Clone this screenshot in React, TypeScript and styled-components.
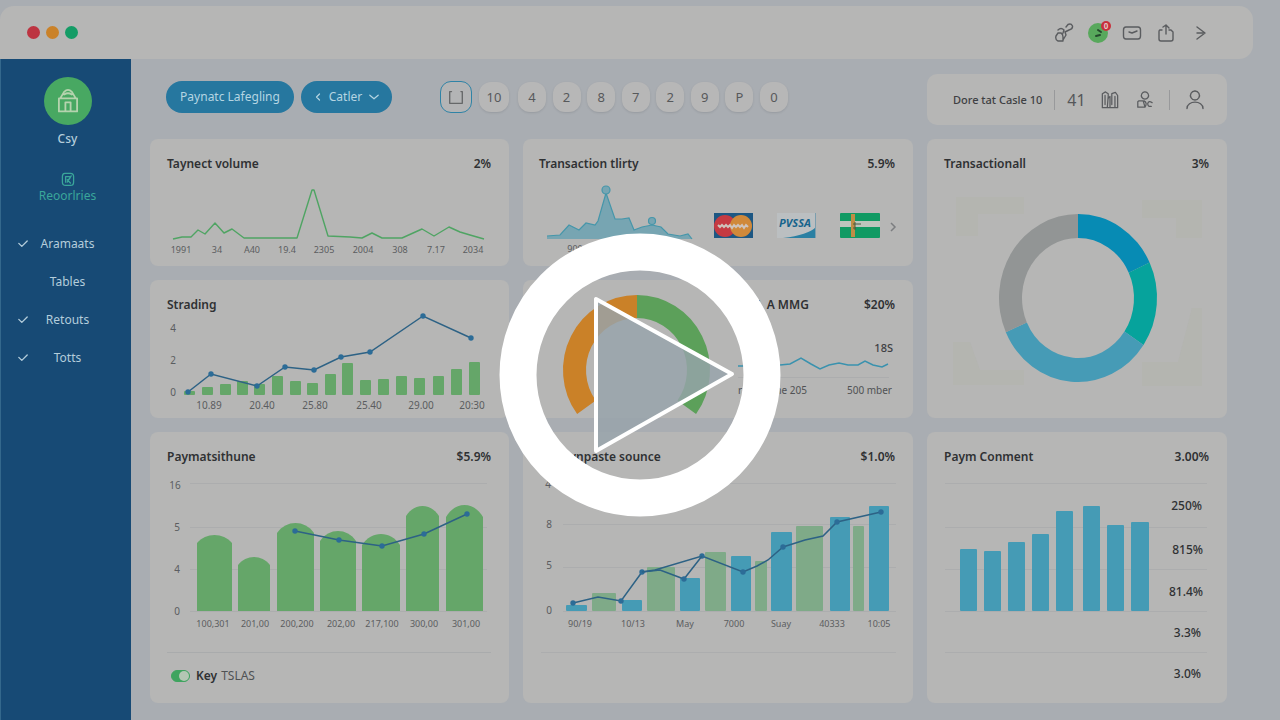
import React from "react";
import styled, { createGlobalStyle } from "styled-components";

const GlobalStyle = createGlobalStyle`
  *, *::before, *::after { box-sizing: border-box; }
  body {
    margin: 0;
    background: #a9adb2;
    color: #2f3133;
    font-family: "Noto Sans", "Open Sans", sans-serif;
    font-size: 12px;
    line-height: 16px;
  }
  button, input { font: inherit; color: inherit; }
`;

/* ---------- page frame ---------- */

const Page = styled.div`
  position: relative;
  display: flex;
  flex-direction: column;
  min-height: 100vh;
  padding-top: 6px;
`;

const WindowBar = styled.header`
  display: flex;
  align-items: center;
  justify-content: space-between;
  height: 53px;
  margin-right: 27px;
  padding: 0 43px 0 27px;
  background: #b6b6b5;
  border-radius: 14px 14px 14px 0;
`;

const Lights = styled.div`
  display: flex;
  gap: 6px;
`;

const Light = styled.span<{ $color: string }>`
  width: 13px;
  height: 13px;
  border-radius: 50%;
  background: ${(p) => p.$color};
`;

const BarActions = styled.div`
  display: flex;
  align-items: center;
  gap: 14px;
`;

const IconButton = styled.button`
  position: relative;
  display: grid;
  place-items: center;
  width: 20px;
  height: 20px;
  padding: 0;
  border: 0;
  background: none;
  color: #5a5c5f;
`;

const StatusButton = styled(IconButton)`
  border-radius: 50%;
  background: #58a85c;
  color: #24482c;
`;

const Badge = styled.span`
  position: absolute;
  top: -2px;
  right: -3px;
  width: 10px;
  height: 10px;
  border-radius: 50%;
  background: #c8303c;
  color: #e4c4c4;
  font-size: 8px;
  font-weight: 700;
  line-height: 10px;
  text-align: center;
`;

const Body = styled.div`
  display: flex;
  flex: 1;
`;

/* ---------- sidebar ---------- */

const Sidebar = styled.aside`
  display: flex;
  flex-direction: column;
  align-items: center;
  width: 131px;
  flex-shrink: 0;
  padding: 18px 0 24px 3px;
  background: #174a75;
  border-left: 1px solid #34688c;
  color: #b4cddb;
`;

const Avatar = styled.div`
  display: grid;
  place-items: center;
  width: 48px;
  height: 48px;
  border-radius: 50%;
  background: #48a862;
  color: #b5d3ae;
`;

const UserName = styled.div`
  margin-top: 6px;
  font-weight: 500;
`;

const ActiveLink = styled.a`
  display: flex;
  flex-direction: column;
  align-items: center;
  gap: 1px;
  margin-top: 24px;
  color: #3aa69a;
  text-decoration: none;
`;

const NavList = styled.ul`
  width: 100%;
  margin: 21px 0 0;
  padding: 0;
  list-style: none;
`;

const NavLink = styled.a`
  display: grid;
  grid-template-columns: 12px 1fr 12px;
  align-items: center;
  height: 38px;
  padding: 0 13px;
  color: inherit;
  text-align: center;
  text-decoration: none;
`;

const NavLabel = styled.span`
  grid-column: 2;
`;

/* ---------- toolbar ---------- */

const Main = styled.main`
  flex: 1;
  min-width: 0;
  padding: 15px 53px 17px 19px;
`;

const Columns = styled.div`
  display: grid;
  grid-template-columns: 359fr 390fr 300fr;
  gap: 14px;
`;

const Toolbar = styled(Columns)`
  margin-bottom: 14px;
`;

const Filters = styled.div`
  display: flex;
  align-items: flex-start;
  grid-column: span 2;
  padding: 7px 0 0 16px;
`;

const Pill = styled.button<{ $width: number }>`
  display: flex;
  align-items: center;
  justify-content: center;
  gap: 6px;
  width: ${(p) => p.$width}px;
  height: 32px;
  margin-right: 7px;
  padding: 0;
  border: 0;
  border-radius: 16px;
  background: #26779f;
  color: #b5d5e2;
  font-size: 12px;
  white-space: nowrap;
`;

const Pager = styled.nav`
  display: flex;
  align-items: center;
  gap: 7px;
  margin-left: 41px;
`;

const PageGroup = styled.div`
  display: flex;
  justify-content: space-between;
  width: 270px;
  margin-left: 2px;
`;

const PageButton = styled.button<{ $wide?: boolean }>`
  width: ${(p) => (p.$wide ? 30 : 28)}px;
  height: 30px;
  padding: 0;
  border: 0;
  border-radius: 12px;
  background: #b7b7b7;
  box-shadow: 0 1px 2px rgba(80, 84, 90, 0.2);
  color: #57595b;
  font-size: 13px;
`;

const SelectedPage = styled.button`
  display: grid;
  place-items: center;
  width: 32px;
  height: 32px;
  padding: 0;
  border: 1px solid #2f83a6;
  border-radius: 11px;
  background: #b3b4b5;
  color: #666869;
`;

const Account = styled.div`
  display: flex;
  align-items: center;
  justify-content: space-between;
  height: 51px;
  padding: 0 22px 0 26px;
  border-radius: 10px;
  background: #b6b6b5;
  color: #3e4043;
  font-size: 11px;
  font-weight: 500;
  white-space: nowrap;
`;

const AccountLead = styled.div`
  display: flex;
  align-items: center;
  gap: 12px;
`;

const Count = styled.span`
  font-size: 16px;
  font-weight: 400;
  line-height: 20px;
  color: #55575a;
`;

const Divider = styled.span`
  width: 1px;
  height: 20px;
  background: #98999b;
`;

/* ---------- cards ---------- */

const Card = styled.section<{ $rows?: number }>`
  grid-row: span ${(p) => p.$rows ?? 1};
  min-width: 0;
  border-radius: 8px;
  background: #b6b6b5;
`;

const SplitCard = styled(Card)`
  display: grid;
  grid-template-columns: 196fr 194fr;
`;

const CardHeader = styled.div<{ $indent?: number }>`
  display: flex;
  justify-content: space-between;
  height: 35px;
  padding: 15px 18px 0 ${(p) => p.$indent ?? 17}px;
`;

const CardTitle = styled.h2`
  margin: 0;
  font-size: 12px;
  font-weight: 600;
  line-height: 20px;
  white-space: nowrap;
`;

const CardValue = styled.span`
  font-weight: 600;
  line-height: 20px;
`;

const CardFooter = styled.label`
  display: flex;
  align-items: center;
  gap: 6px;
  height: 51px;
  margin: 0 18px 0 17px;
  padding: 0 0 4px 4px;
  border-top: 1px solid #a9abac;
  color: #505254;
`;

const Strong = styled.span`
  margin-right: 4px;
  color: #2f3133;
  font-weight: 600;
`;

const Toggle = styled.input`
  appearance: none;
  display: flex;
  justify-content: flex-end;
  width: 19px;
  height: 12px;
  margin: 0;
  border: 1px solid #3fa45f;
  border-radius: 6px;
  background: #3fa45f;

  &::after {
    content: "";
    width: 10px;
    height: 10px;
    border-radius: 50%;
    background: #b4c6b4;
  }
`;

const Chart = styled.svg`
  display: block;
  width: 100%;
  height: auto;
  overflow: visible;
  font-size: 10px;
`;

const PlayLayer = styled.div`
  position: absolute;
  inset: 0;
  display: grid;
  place-items: center;
  padding-top: 30px;
  pointer-events: none;
`;

const PlayButton = styled.button`
  padding: 0;
  border: 0;
  border-radius: 50%;
  background: none;
  line-height: 0;
  pointer-events: auto;
`;

/* ---------- chart helpers ---------- */

const GREEN = "#65a669";
const PALE_GREEN = "#7faa88";
const BLUE = "#459bb5";
const LINE = "#2d6285";
const RULE = "#acadae";

type Pt = [number, number];
type Bar = [x: number, width: number, top: number];
type Tick = [x: number, y: number, text: string];

const toPoints = (pts: Pt[]) => pts.map((p) => p.join(",")).join(" ");

function arc(cx: number, cy: number, outer: Pt, inner: Pt, from: number, to: number) {
  const at = (r: Pt, deg: number) => {
    const t = (deg * Math.PI) / 180;
    return `${cx + r[0] * Math.sin(t)} ${cy - r[1] * Math.cos(t)}`;
  };
  const large = to - from > 180 ? 1 : 0;
  return `M${at(outer, from)} A${outer[0]} ${outer[1]} 0 ${large} 1 ${at(outer, to)} L${at(inner, to)} A${inner[0]} ${inner[1]} 0 ${large} 0 ${at(inner, from)}Z`;
}

const Bars = ({ data, base, fill }: { data: Bar[]; base: number; fill: string }) => (
  <g fill={fill}>
    {data.map(([x, w, top]) => (
      <rect key={x} x={x} y={top} width={w} height={base - top} rx="1" />
    ))}
  </g>
);

const Ticks = ({ data, fill = "#5b5d60", size = 10 }: { data: Tick[]; fill?: string; size?: number }) => (
  <g fill={fill} textAnchor="middle" fontSize={size}>
    {data.map(([x, y, t]) => (
      <text key={`${x}-${y}`} x={x} y={y}>
        {t}
      </text>
    ))}
  </g>
);

const Rules = ({ x1, x2, ys }: { x1: number; x2: number; ys: number[] }) => (
  <path d={ys.map((y) => `M${x1} ${y + 0.5}H${x2}`).join("")} stroke={RULE} />
);

const Trend = ({ pts, dots = pts }: { pts: Pt[]; dots?: Pt[] }) => (
  <g>
    <polyline points={toPoints(pts)} fill="none" stroke={LINE} strokeWidth="1.5" />
    {dots.map(([x, y]) => (
      <circle key={x} cx={x} cy={y} r="2.7" fill="#2c6c97" />
    ))}
  </g>
);

const Stroke = ({ d, size = 20, width = 1.4 }: { d: string; size?: number; width?: number }) => (
  <svg width={size} height={size} viewBox="0 0 20 20" fill="none" stroke="currentColor" strokeWidth={width} strokeLinecap="round" strokeLinejoin="round" aria-hidden="true">
    <path d={d} />
  </svg>
);

const ICON = {
  link: "M4 10H7Q9 11 9 14V18H4Q1 17 2 13ZM4 7Q7 4 10 7L9 10M9 17 12 12 11 9 15 7Q19 6 18.500 3 17 0 14 1.500L12 4",
  mail: "M4 4H16Q18.500 4 18.500 7V13Q18.500 16 16 16H4Q1.500 16 1.500 13V7Q1.500 4 4 4ZM7 9 10 10 15 8",
  share: "M6 7H4Q3 7 3 9V16Q3 18 5 18H15Q17 18 17 16V9L15 7H13M10 11V2M7 4 10 2 13 5",
  next: "M7 4 15 10 7 16M7 10H13",
  house: "M3 8H17V18H3ZM4 8 7 3Q10 0 13 3L16 8M7 5Q10 3 13 5M8 18V11H12V18",
  chart: "M1.500 18.500V3L5 1 8 3V6L7 18.500ZM1.500 18.500H18.500V5L16 1.500 12 3V15M8 8 10 6 10 18M4.500 5V15M15.500 6V18",
  team: "M10 1A4 4 0 1 1 9.900 1M3 11H8L10 18H2V12ZM9 11Q13 13 10 18M18 13Q14 10 13 14 13 18 17 17",
  user: "M10 1A4.500 4.500 0 1 1 9.900 1M2 18.500C2 10 18 10 18 18.500",
  check: "M3 9 8 14 17 5",
  left: "M13 4 7 10 13 16",
  down: "M3 7 10 13 17 7",
  frame: "M5 4H3V17H17V4H15.500",
  report: "M6 3H13Q17 3 17 7V14Q17 18 13 18H7Q3 18 3 14V7Q3 3 6 3ZM7 14V7H12Q14 10 9 11L13 15M9 14 14 6",
};

/* ---------- data ---------- */

const NAV: { label: string; checked: boolean }[] = [
  { label: "Aramaats", checked: true },
  { label: "Tables", checked: false },
  { label: "Retouts", checked: true },
  { label: "Totts", checked: true },
];

const PAGES = ["4", "2", "8", "7", "2", "9", "P", "0"];

const VOLUME: Pt[] = [
  [173, 239], [182, 237], [191, 237], [198, 230], [205, 234], [215, 223], [224, 233], [232, 229],
  [244, 238], [297, 238], [312, 190], [314, 190], [328, 236], [350, 237], [362, 238], [372, 233], [382, 238],
  [402, 238], [422, 229], [434, 236], [449, 227], [460, 232], [470, 235], [484, 239],
];

const ACTIVITY: Pt[] = [
  [547, 239], [547, 236], [560, 235], [569, 225], [579, 230], [586, 223], [595, 225], [598, 221], [606, 193],
  [615, 219], [622, 219], [629, 218], [634, 230], [642, 227], [652, 225], [661, 227], [668, 234], [680, 236], [688, 234], [692, 239],
];

const TRADING_TOPS = [391, 387, 384, 381, 384, 376, 381, 383, 374, 363, 380, 379, 376, 378, 376, 369, 362];
const TRADING_X = [184, 202, 220, 237, 254, 272, 290, 307, 325, 342, 360, 378, 396, 414, 433, 451, 469];
const TRADING_BARS: Bar[] = TRADING_TOPS.map((top, i) => [TRADING_X[i], 11, top]);
const TRADING_LINE: Pt[] = [[188, 392], [211, 374], [257, 386], [285, 367], [314, 370], [341, 357], [370, 352], [423, 316], [471, 338]];

const DOMES: [x: number, width: number, top: number, shoulder: number][] = [
  [197, 35, 535, 543], [238, 32, 557, 565], [277, 37, 523, 533], [320, 36, 531, 541],
  [362, 38, 534, 545], [406, 33, 506, 516], [446, 37, 505, 517],
];
const DOME_LINE: Pt[] = [[295, 531], [339, 540], [382, 546], [424, 534], [467, 514]];

const SOURCE_BLUE: Bar[] = [[566, 21, 605], [622, 20, 600], [680, 20, 578], [731, 20, 556], [771, 21, 532], [830, 20, 517], [869, 20, 506]];
const SOURCE_GREEN: Bar[] = [[592, 24, 593], [647, 28, 567], [705, 21, 552], [755, 12, 561], [796, 27, 526], [853, 11, 526]];
const SOURCE_LINE: Pt[] = [
  [573, 603], [598, 597], [621, 601], [642, 572], [655, 570], [702, 556], [743, 572], [757, 566], [768, 560],
  [783, 547], [805, 540], [823, 536], [837, 522], [881, 512],
];
const SOURCE_BRANCH: Pt[] = [[642, 572], [660, 570], [684, 579], [702, 556]];

const COMMENT_BARS: Bar[] = [
  [960, 17, 549], [984, 17, 551], [1008, 17, 542], [1032, 17, 534], [1056, 17, 511], [1083, 17, 506], [1107, 17, 525], [1131, 18, 522],
];

/* ---------- parts ---------- */

const Header = ({ title, value, indent }: { title: string; value?: string; indent?: number }) => (
  <CardHeader $indent={indent}>
    <CardTitle>{title}</CardTitle>
    {value && <CardValue>{value}</CardValue>}
  </CardHeader>
);

const VolumeCard = () => (
  <Card>
    <Header title="Taynect volume" value="2%" />
    <Chart viewBox="150 174 359 92">
      <polyline points={toPoints(VOLUME)} fill="none" stroke="#4fa463" strokeWidth="1.4" strokeLinejoin="round" />
      <Ticks
        data={[[181, 253, "1991"], [217, 253, "34"], [252, 253, "A40"], [287, 253, "19.4"], [324, 253, "2305"], [363, 253, "2004"], [400, 253, "308"], [436, 253, "7.17"], [473, 253, "2034"]]}
        size={9}
      />
    </Chart>
  </Card>
);

const ActivityCard = () => (
  <Card>
    <Header title="Transaction tlirty" value="5.9%" indent={16} />
    <Chart viewBox="523 174 390 92">
      <polygon points={toPoints(ACTIVITY)} fill="#77a5b2" />
      <g fill="none" stroke="#4596aa" strokeWidth="1.2">
        <polyline points={toPoints(ACTIVITY.slice(1))} />
        <circle cx="606" cy="190" r="4" fill="#77a5b2" />
        <circle cx="652" cy="221" r="3.500" fill="#77a5b2" />
      </g>
      <Ticks data={[[575, 252, "900"]]} size={9} />
      <g>
        <rect x="714" y="213" width="39" height="25" fill="#1d5783" />
        <circle cx="725" cy="226" r="11" fill="#c53a42" />
        <circle cx="741" cy="226" r="11" fill="#d0893a" />
        <path d="M718 225l2 2 2-2 2 2 2-2 2 2 2-2 2 3 2-3 2 2 2-2 2 2 2-2 2 3 2-3 2 2" fill="none" stroke="#cfc4bd" strokeWidth="2" />
      </g>
      <g>
        <rect x="777" y="213" width="39" height="25" fill="#bbbfc1" />
        <path d="M783 238Q808 235 816 227V238Z" fill="#2b80a3" />
        <path d="M815.500 213V238" stroke="#7c9eae" />
        <text x="795" y="227" textAnchor="middle" fontSize="11" fontWeight="700" fontStyle="italic" fill="#17648c">
          PVSSA
        </text>
      </g>
      <g>
        <rect x="840" y="213" width="40" height="25" rx="1" fill="#109a63" />
        <rect x="840" y="221" width="40" height="6" fill="#bcc5bd" />
        <rect x="851" y="214" width="4" height="23" fill="#bf8d45" />
        <path d="M855 222v8M853 224h8M853 228h3" stroke="#4b5c42" />
      </g>
      <path d="M891 223 895 227 891 231" fill="none" stroke="#7c7e80" strokeWidth="1.500" />
    </Chart>
  </Card>
);

const DonutCard = () => {
  const slice = (from: number, to: number) => arc(1078, 298, [79, 84], [56, 60], from, to);
  return (
    <Card $rows={2}>
      <Header title="Transactionall" value="3%" />
      <Chart viewBox="927 174 300 244">
        <path
          d="M956 197H1024V214H978V236H956ZM1142 200H1202V238H1176V218H1142ZM953 342H970L980 370H1024V385H953ZM1202 308V386H1142V362H1178L1192 308Z"
          fill="#b2b4ab"
          opacity="0.5"
        />
        <ellipse cx="1078" cy="298" rx="57" ry="61" fill="#b6b6b5" />
        <path d={slice(0, 65)} fill="#078bb4" />
        <path d={slice(65, 124)} fill="#06a39c" />
        <path d={slice(124, 246)} fill="#469bb6" />
        <path d={slice(246, 360)} fill="#929595" />
      </Chart>
    </Card>
  );
};

const TradingCard = () => (
  <Card>
    <Header title="Strading" />
    <Chart viewBox="150 315 359 103">
      <Bars data={TRADING_BARS} base={395} fill={GREEN} />
      <Trend pts={TRADING_LINE} />
      <Ticks data={[[173, 332, "4"], [173, 364, "2"], [173, 396, "0"]]} />
      <Ticks data={[[209, 409, "10.89"], [262, 409, "20.40"], [315, 409, "25.80"], [369, 409, "25.40"], [421, 409, "29.00"], [472, 409, "20:30"]]} />
    </Chart>
  </Card>
);

const GaugeCard = () => (
  <SplitCard>
    <Chart viewBox="523 280 196 138">
      <path d={arc(637, 370, [74, 75], [51, 52], 234, 360)} fill="#ca8128" />
      <path d={arc(637, 370, [73, 75], [50, 52], 0, 126)} fill="#5ca05a" />
    </Chart>
    <div>
      <Header title="L A MMG" value="$20%" indent={38} />
      <Chart viewBox="719 315 194 103">
        <polyline
          points="738,366 744,366 760,363 780,365 790,364 801,358 811,364 820,369 829,365 839,363 848,365 858,365 865,361 873,365 882,367 888,364"
          fill="none"
          stroke="#3a92ae"
          strokeWidth="1.500"
        />
        <path d="M738 377.500H889" stroke={RULE} />
        <text x="893" y="352" textAnchor="end" fontSize="11" fontWeight="500" fill="#3e4043">
          18S
        </text>
        <text x="738" y="394" fill="#505254">
          r
        </text>
        <text x="807" y="394" textAnchor="end" fill="#505254">
          me 205
        </text>
        <text x="892" y="394" textAnchor="end" fill="#505254">
          500 mber
        </text>
      </Chart>
    </div>
  </SplitCard>
);

const PaymentCard = () => (
  <Card>
    <Header title="Paymatsithune" value="$5.9%" />
    <Chart viewBox="150 467 359 185">
      <Rules x1={190} x2={487} ys={[483, 527, 569, 611]} />
      <g fill={GREEN}>
        {DOMES.map(([x, w, top, shoulder]) => {
          const peak = shoulder - ((shoulder - top) * 4) / 3;
          return <path key={x} d={`M${x} 611V${shoulder}C${x + w * 0.25} ${peak} ${x + w * 0.75} ${peak} ${x + w} ${shoulder}V611Z`} />;
        })}
      </g>
      <Trend pts={DOME_LINE} />
      <Ticks data={[[175, 489, "16"], [177, 531, "5"], [177, 573, "4"], [177, 615, "0"]]} />
      <Ticks
        data={[[213, 627, "100,301"], [255, 627, "201,00"], [297, 627, "200,200"], [341, 627, "202,00"], [382, 627, "217,100"], [424, 627, "300,00"], [466, 627, "301,00"]]}
        size={9}
      />
    </Chart>
    <CardFooter>
      <Toggle type="checkbox" defaultChecked />
      <span>
        <Strong>Key</Strong>TSLAS
      </span>
    </CardFooter>
  </Card>
);

const SourceCard = () => (
  <Card>
    <Header title="Paynpaste sounce" value="$1.0%" indent={32} />
    <Chart viewBox="523 467 390 236">
      <Rules x1={563} x2={896} ys={[483, 524, 567, 611]} />
      <Rules x1={541} x2={896} ys={[652]} />
      <Bars data={SOURCE_GREEN} base={611} fill={PALE_GREEN} />
      <Bars data={SOURCE_BLUE} base={611} fill={BLUE} />
      <Trend pts={SOURCE_LINE} dots={[[573, 603], [621, 601], [642, 572], [702, 556], [743, 572], [783, 547], [837, 522], [881, 512]]} />
      <Trend pts={SOURCE_BRANCH} dots={[[684, 579]]} />
      <Ticks data={[[548, 488, "4"], [549, 528, "8"], [549, 569, "5"], [549, 614, "0"]]} />
      <Ticks data={[[580, 627, "90/19"], [633, 627, "10/13"], [685, 627, "May"], [734, 627, "7000"], [781, 627, "Suay"], [832, 627, "40333"], [879, 627, "10:05"]]} size={9} />
    </Chart>
  </Card>
);

const CommentCard = () => (
  <Card>
    <Header title="Paym Conment" value="3.00%" />
    <Chart viewBox="927 467 300 236">
      <Rules x1={945} x2={1207} ys={[483, 527, 569, 611, 652]} />
      <Bars data={COMMENT_BARS} base={611} fill={BLUE} />
      <g fontSize="12" fontWeight="500" fill="#2f3133" textAnchor="end">
        <text x="1202" y="510">250%</text>
        <text x="1203" y="554">815%</text>
        <text x="1203" y="596">81.4%</text>
        <text x="1201" y="637">3.3%</text>
        <text x="1201" y="678">3.0%</text>
      </g>
    </Chart>
  </Card>
);

export default function App() {
  return (
    <>
      <GlobalStyle />
      <Page>
        <WindowBar>
          <Lights>
            <Light $color="#bd3441" />
            <Light $color="#ca8229" />
            <Light $color="#149c66" />
          </Lights>
          <BarActions>
            <IconButton aria-label="Connections"><Stroke d={ICON.link} /></IconButton>
            <StatusButton aria-label="Status">
              <Stroke d="M10 7 13 9M8 13 12 12" width={2} />
              <Badge>0</Badge>
            </StatusButton>
            <IconButton aria-label="Messages"><Stroke d={ICON.mail} /></IconButton>
            <IconButton aria-label="Share"><Stroke d={ICON.share} /></IconButton>
            <IconButton aria-label="Next"><Stroke d={ICON.next} /></IconButton>
          </BarActions>
        </WindowBar>
        <Body>
          <Sidebar>
            <Avatar><Stroke d={ICON.house} size={26} /></Avatar>
            <UserName>Csy</UserName>
            <ActiveLink href="#reports">
              <Stroke d={ICON.report} size={16} width={1.6} />
              Reoorlries
            </ActiveLink>
            <NavList>
              {NAV.map((item) => (
                <li key={item.label}>
                  <NavLink href={`#${item.label.toLowerCase()}`}>
                    {item.checked && <Stroke d={ICON.check} size={12} width={2.2} />}
                    <NavLabel>{item.label}</NavLabel>
                  </NavLink>
                </li>
              ))}
            </NavList>
          </Sidebar>
          <Main>
            <Toolbar>
              <Filters>
                <Pill $width={128}>Paynatc Lafegling</Pill>
                <Pill $width={91}>
                  <Stroke d={ICON.left} size={10} width={2.4} />
                  Catler
                  <Stroke d={ICON.down} size={12} width={2} />
                </Pill>
                <Pager aria-label="Pages">
                  <SelectedPage aria-label="First page"><Stroke d={ICON.frame} size={18} width={1.5} /></SelectedPage>
                  <PageButton $wide>10</PageButton>
                  <PageGroup>
                    {PAGES.map((p, i) => (
                      <PageButton key={i}>{p}</PageButton>
                    ))}
                  </PageGroup>
                </Pager>
              </Filters>
              <Account>
                <AccountLead>
                  <span>Dore tat Casle 10</span>
                  <Divider />
                  <Count>41</Count>
                </AccountLead>
                <IconButton aria-label="Statistics"><Stroke d={ICON.chart} size={18} /></IconButton>
                <IconButton aria-label="Team"><Stroke d={ICON.team} size={18} /></IconButton>
                <Divider />
                <IconButton aria-label="Profile"><Stroke d={ICON.user} /></IconButton>
              </Account>
            </Toolbar>
            <Columns>
              <VolumeCard />
              <ActivityCard />
              <DonutCard />
              <TradingCard />
              <GaugeCard />
              <PaymentCard />
              <SourceCard />
              <CommentCard />
            </Columns>
          </Main>
        </Body>
        <PlayLayer>
          <PlayButton aria-label="Play video">
            <svg width="282" height="284" viewBox="0 0 282 284" aria-hidden="true">
              <ellipse cx="141" cy="142" rx="122" ry="123" fill="none" stroke="#fff" strokeWidth="37" />
              <path d="M97 66V218L233 141Z" fill="#97a3ab" fillOpacity="0.82" stroke="#fff" strokeWidth="4" strokeLinejoin="round" />
            </svg>
          </PlayButton>
        </PlayLayer>
      </Page>
    </>
  );
}
